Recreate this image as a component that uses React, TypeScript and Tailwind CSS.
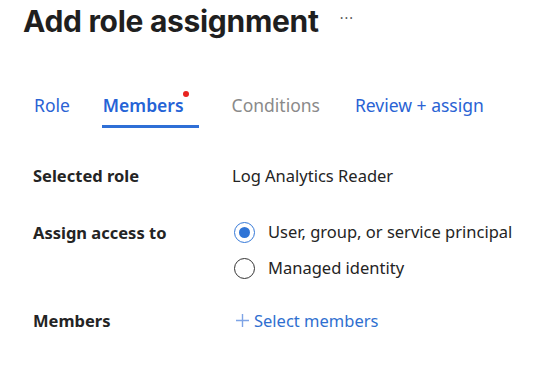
import { useState } from "react";

const tabs = ["Role", "Members", "Conditions", "Review + assign"];

const App = () => {
    const [assignTo, setAssignTo] = useState("user");

    return (
        <div className="w-[548px] h-[368px] bg-white overflow-hidden font-['Noto_Sans',sans-serif] text-[#242424]">
            <div className="flex items-center pl-[23px] pt-[1px] h-[40px]">
                <h1 className="font-['Inter',sans-serif] font-bold text-[30px] leading-[36px] tracking-[-0.3px] text-[#1f1f1f]">
                    Add role assignment
                </h1>
                <span className="ml-[21px] mb-[6px] text-[#555] text-[14px] tracking-[1px]">
                    ···
                </span>
            </div>

            <div className="flex gap-[33px] pl-[34px] mt-[52px] text-[17.5px]">
                {tabs.map((tab) => {
                    const active = tab === "Members";
                    const disabled = tab === "Conditions";
                    return (
                        <div
                            key={tab}
                            className={`relative pb-[10px] ${active ? "pr-[15px]" : ""} ${
                                tab === "Review + assign" ? "ml-[2px]" : ""
                            }`}
                        >
                            <span
                                className={
                                    active
                                        ? "font-semibold text-[#2563d6]"
                                        : disabled
                                        ? "text-[#8a8a8a]"
                                        : "text-[#2a63d4]"
                                }
                            >
                                {tab}
                            </span>
                            {active && (
                                <>
                                    <span className="absolute right-[10px] top-[-1px] w-[6px] h-[6px] rounded-full bg-[#e8231f]" />
                                    <div className="absolute -left-[1px] right-0 bottom-0 h-[3px] bg-[#2f6fd6]" />
                                </>
                            )}
                        </div>
                    );
                })}
            </div>

            <div className="grid grid-cols-[199px_1fr] pl-[33px] mt-[36px] text-[16.5px]">
                <div className="font-bold">Selected role</div>
                <div>Log Analytics Reader</div>

                <div className="font-bold mt-[32px]">Assign access to</div>
                <div className="flex flex-col gap-[11px] mt-[31px]">
                    {[
                        { id: "user", label: "User, group, or service principal" },
                        { id: "managed", label: "Managed identity" },
                    ].map((opt) => (
                        <label
                            key={opt.id}
                            className="flex items-center gap-[13px] cursor-pointer"
                            onClick={() => setAssignTo(opt.id)}
                        >
                            <span
                                className={`ml-[2px] w-[21px] h-[21px] rounded-full border flex items-center justify-center ${
                                    assignTo === opt.id
                                        ? "border-[#3478d8]"
                                        : "border-[#333]"
                                }`}
                            >
                                {assignTo === opt.id && (
                                    <span className="w-[11px] h-[11px] rounded-full bg-[#2f74d6]" />
                                )}
                            </span>
                            <span>{opt.label}</span>
                        </label>
                    ))}
                </div>

                <div className="font-bold mt-[28px]">Members</div>
                <div className="flex items-center gap-[5px] mt-[28px] text-[#2f6fd0]">
                    <svg width="13" height="13" viewBox="0 0 13 13" className="ml-[4px]">
                        <path d="M6.5 0v13M0 6.5h13" stroke="#7ea4e6" strokeWidth="1.4" />
                    </svg>
                    <span>Select members</span>
                </div>
            </div>
        </div>
    );
};

export default App;
